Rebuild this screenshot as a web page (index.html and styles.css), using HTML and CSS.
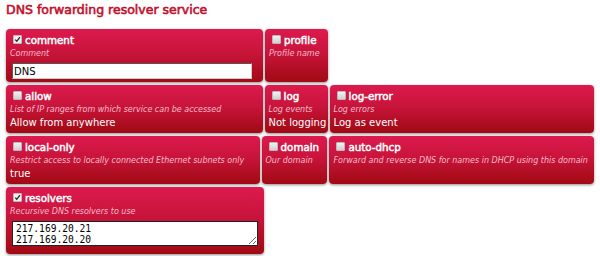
FILE: index.html
```html
<!DOCTYPE html>
<html lang="en">
<head>
    <meta charset="UTF-8">
    <title>DNS forwarding resolver service</title>
    <link rel="stylesheet" href="styles.css">
</head>
<body>
    <h1 class="title">DNS forwarding resolver service</h1>

    <div class="grid">
        <div class="row">
            <div class="field w-257">
                <div class="field-name"><span class="check on"><svg viewBox="0 0 9 9"><path d="M1.6 4.6 L3.6 6.8 L7.6 1.6" /></svg></span>comment</div>
                <div class="field-desc">Comment</div>
                <input class="field-input" type="text" value="DNS">
            </div>
            <div class="field w-63">
                <div class="field-name"><span class="check"></span>profile</div>
                <div class="field-desc">Profile name</div>
            </div>
        </div>

        <div class="row">
            <div class="field w-257">
                <div class="field-name"><span class="check"></span>allow</div>
                <div class="field-desc">List of IP ranges from which service can be accessed</div>
                <div class="field-value">Allow from anywhere</div>
            </div>
            <div class="field w-63">
                <div class="field-name"><span class="check"></span>log</div>
                <div class="field-desc">Log events</div>
                <div class="field-value">Not logging</div>
            </div>
            <div class="field w-265">
                <div class="field-name"><span class="check"></span>log-error</div>
                <div class="field-desc">Log errors</div>
                <div class="field-value">Log as event</div>
            </div>
        </div>

        <div class="row">
            <div class="field w-254">
                <div class="field-name"><span class="check"></span>local-only</div>
                <div class="field-desc">Restrict access to locally connected Ethernet subnets only</div>
                <div class="field-value">true</div>
            </div>
            <div class="field w-66">
                <div class="field-name"><span class="check"></span>domain</div>
                <div class="field-desc">Our domain</div>
            </div>
            <div class="field w-265">
                <div class="field-name"><span class="check"></span>auto-dhcp</div>
                <div class="field-desc">Forward and reverse DNS for names in DHCP using this domain</div>
            </div>
        </div>

        <div class="row">
            <div class="field w-258 tall">
                <div class="field-name"><span class="check on"><svg viewBox="0 0 9 9"><path d="M1.6 4.6 L3.6 6.8 L7.6 1.6" /></svg></span>resolvers</div>
                <div class="field-desc">Recursive DNS resolvers to use</div>
                <textarea class="field-text">217.169.20.21
217.169.20.20</textarea>
            </div>
        </div>
    </div>
</body>
</html>
```

FILE: styles.css
```css
:root {
    --red-top: #dc1a4e;
    --red-bottom: #a00a13;
    --title: #c20f2c;
    --desc: #f6bccb;
}

* {
    box-sizing: border-box;
}

body {
    margin: 0;
    padding: 2px 6px;
    background: #fff;
    font-family: "DejaVu Sans", Verdana, sans-serif;
}

/* bold in the original is a synthesized one, so keep regular widths */
.title {
    margin: 0 0 12px;
    font-size: 12.5px;
    line-height: 15px;
    font-weight: normal;
    color: var(--title);
    -webkit-text-stroke: 0.6px var(--title);
}

.grid {
    display: flex;
    flex-direction: column;
    gap: 3px;
}

.row {
    display: flex;
    gap: 2px;
}

.field {
    padding: 4px 4px 3px;
    border-radius: 4px;
    background: linear-gradient(180deg, var(--red-top) 0%, #c8143a 45%, var(--red-bottom) 100%);
    box-shadow: 0 1px 3px rgba(0, 0, 0, 0.45);
    color: #fff;
}

.field.tall {
    padding-bottom: 8px;
}

.w-254 { width: 254px; }
.w-257 { width: 257px; }
.w-258 { width: 258px; }
.w-265 { width: 265px; }
.w-63 { width: 63px; }
.w-66 { width: 66px; }

.field-name {
    font-size: 10.3px;
    line-height: 15px;
    white-space: nowrap;
    -webkit-text-stroke: 0.5px #fff;
}

.check {
    display: inline-block;
    width: 9px;
    height: 9px;
    margin: 0 3px;
    vertical-align: baseline;
    background: linear-gradient(180deg, #f2f2f2, #cfcfcf);
    border: 1px solid #b9b9b9;
    border-radius: 1px;
    -webkit-text-stroke: 0;
}

.check svg {
    display: block;
    width: 100%;
    height: 100%;
    fill: none;
    stroke: #222;
    stroke-width: 1.6;
}

.check.on {
    background: #eee;
}

.field-desc {
    font-size: 8px;
    line-height: 12px;
    font-style: italic;
    color: var(--desc);
    white-space: nowrap;
}

.field-value {
    font-size: 10px;
    line-height: 14px;
    white-space: nowrap;
}

.field-input {
    display: block;
    width: 240px;
    height: 16px;
    margin: 3px 0 0 2px;
    padding: 0 1px;
    border: 1px solid #555;
    border-right-color: #ccc;
    border-bottom-color: #ccc;
    background: #fff;
    font-family: "DejaVu Sans", Verdana, sans-serif;
    font-size: 10px;
    color: #000;
}

.field-text {
    display: block;
    width: 246px;
    height: 25px;
    margin: 3px 0 0 2px;
    padding: 2px 3px 0;
    border: 1px solid #222;
    background: #fff;
    font-family: "DejaVu Sans Mono", monospace;
    font-size: 9.6px;
    line-height: 10.5px;
    color: #000;
    overflow: hidden;
}
```
